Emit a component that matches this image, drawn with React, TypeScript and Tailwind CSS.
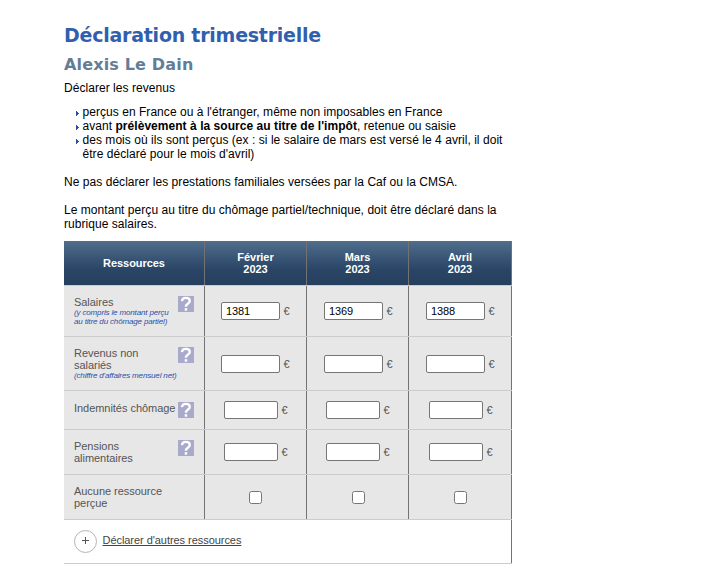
import React from "react";

const months = ["Février", "Mars", "Avril"];
const colWidth = ["w-[102px]", "w-[102px]", "w-[103px]"];
const widePad = ["pl-[16px]", "pl-[17px]", "pl-[17px]"];
const narrowPad = ["pl-[19px]", "pl-[19px]", "pl-[20px]"];
const checkPad = ["pl-[44px]", "pl-[45px]", "pl-[45px]"];

function Help({ top }: { top: string }) {
  return (
    <svg className={`${top} h-4 w-4 shrink-0`} viewBox="0 0 16 16">
      <rect width="16" height="16" fill="#a9aacb" />
      <path d="M3.9 5.1C4.1 2.9 5.6 1.9 7.9 1.9c2.4 0 3.9 1.1 3.9 3 0 2.6-3.9 2.7-3.9 5.9" fill="none" stroke="#fff" strokeWidth="2.3" />
      <rect x="6.7" y="12.2" width="2.5" height="2.5" fill="#fff" />
    </svg>
  );
}

function Label({ lines, note, pad, help }: { lines: string[]; note?: string[]; pad: string; help?: string }) {
  return (
    <div className="flex w-[141px] shrink-0 border-r border-[#737373] pl-[10px]">
      <div className={`${pad} w-[104px] whitespace-nowrap text-[11px] leading-[12px] tracking-[-0.04px] text-[#555]`}>
        {lines.map((l) => (
          <div key={l}>{l}</div>
        ))}
        {note?.map((l) => (
          <div key={l} className="text-[8px] italic leading-[9px] tracking-[-0.15px] text-[#2b4ea8]">{l}</div>
        ))}
      </div>
      {help && <Help top={help} />}
    </div>
  );
}

function AmountCells({ wide, pad, values = ["", "", ""] }: { wide?: boolean; pad: string; values?: string[] }) {
  return (
    <>
      {values.map((v, i) => (
        <div key={i} className={`flex shrink-0 border-r border-[#737373] ${colWidth[i]} ${wide ? widePad[i] : narrowPad[i]} ${pad}`}>
          <input
            defaultValue={v}
            className={`h-[18px] rounded-[2px] border border-[#767676] bg-white px-1 py-0 text-[11px] leading-[16px] tracking-[-0.15px] text-black ${wide ? "w-[59px]" : "w-[54px]"}`}
          />
          <span className="ml-[3.5px] text-[11px] leading-[18px] text-[#555]">€</span>
        </div>
      ))}
    </>
  );
}

const row = "flex border-b border-[#ccc] bg-[#e7e7e7]";

export default function App() {
  return (
    <main className="h-[582px] w-[724px] overflow-hidden bg-white pl-16 pt-[23px] font-['Liberation_Sans',Arial,sans-serif] text-[12px] leading-[14px] tracking-[0.045px] text-black">
      <h1 className="h-6 whitespace-nowrap font-['DejaVu_Sans',Verdana,sans-serif] text-[19px] font-bold leading-6 tracking-[-0.24px] text-[#315fae]">Déclaration trimestrielle</h1>
      <h2 className="mt-2 h-5 whitespace-nowrap font-['DejaVu_Sans',Verdana,sans-serif] text-[16px] font-bold leading-5 tracking-[0.16px] text-[#637d97]">Alexis Le Dain</h2>
      <p className="mt-[6px] whitespace-nowrap">Déclarer les revenus</p>
      <ul className="mt-[10px] whitespace-nowrap">
        {[
          <>perçus en France ou à l'étranger, même non imposables en France</>,
          <>avant <b>prélèvement à la source au titre de l'impôt</b>, retenue ou saisie</>,
          <>des mois où ils sont perçus (ex : si le salaire de mars est versé le 4 avril, il doit<br />être déclaré pour le mois d'avril)</>,
        ].map((content, i) => (
          <li key={i} className="flex pl-3">
            <svg className="mr-[3.5px] mt-[6px] h-[5px] w-[3px] shrink-0" viewBox="0 0 3 5" shapeRendering="crispEdges">
              <path d="M0 0H1V1H2V2H3V3H2V4H1V5H0Z" fill="#2453a6" />
            </svg>
            <span>{content}</span>
          </li>
        ))}
      </ul>
      <p className="mt-[14px] whitespace-nowrap">Ne pas déclarer les prestations familiales versées par la Caf ou la CMSA.</p>
      <p className="mt-[14px] whitespace-nowrap">Le montant perçu au titre du chômage partiel/technique, doit être déclaré dans la<br />rubrique salaires.</p>

      <section className="mt-[10px] w-[448px] tracking-normal">
        <div className="flex h-[45px] border-b border-[#ccc] bg-linear-to-b from-[#506e8d] via-[#2a4566] via-65% to-[#253f5e] text-center text-[11px] font-bold leading-[12px] tracking-[-0.05px] text-white">
          <div className="w-[141px] border-r border-[#737373] pt-[16px]">Ressources</div>
          {months.map((m, i) => (
            <div key={m} className={`${colWidth[i]} border-r border-[#737373] pt-[10px]`}>{m}<br />2023</div>
          ))}
        </div>
        <div className={`${row} h-[51px]`}>
          <Label lines={["Salaires"]} note={["(y compris le montant perçu", "au titre du chômage partiel)"]} pad="pt-[10px]" help="mt-[10px]" />
          <AmountCells wide pad="pt-[16px]" values={["1381", "1369", "1388"]} />
        </div>
        <div className={`${row} h-[54px]`}>
          <Label lines={["Revenus non", "salariés"]} note={["(chiffre d'affaires mensuel net)"]} pad="pt-[10px]" help="mt-[10px]" />
          <AmountCells wide pad="pt-[18px]" />
        </div>
        <div className={`${row} h-[39px]`}>
          <Label lines={["Indemnités chômage"]} pad="pt-[11px]" help="mt-[11px]" />
          <AmountCells pad="pt-[10px]" />
        </div>
        <div className={`${row} h-[45px]`}>
          <Label lines={["Pensions", "alimentaires"]} pad="pt-[10px]" help="mt-[10px]" />
          <AmountCells pad="pt-[13px]" />
        </div>
        <div className={`${row} h-[45px]`}>
          <Label lines={["Aucune ressource", "perçue"]} pad="pt-[10px]" />
          {months.map((m, i) => (
            <div key={m} className={`${colWidth[i]} ${checkPad[i]} border-r border-[#737373] pt-[16px]`}>
              <input type="checkbox" className="block h-[13px] w-[13px]" />
            </div>
          ))}
        </div>
        <div className="flex h-[44px] border-b border-[#ccc]">
          <div className="flex w-full border-r border-[#737373] pl-[10px] pt-[10px]">
            <div className="flex h-[23px] w-[23px] justify-center rounded-full border border-[#b5b5b5] pt-[6px]">
              <svg className="h-[7px] w-[7px]" viewBox="0 0 7 7">
                <path d="M3.5 0V7M0 3.5H7" stroke="#555" />
              </svg>
            </div>
            <a className="ml-[5.5px] mt-[4px] whitespace-nowrap text-[11px] leading-[12px] tracking-[-0.05px] text-[#444] underline">Déclarer d'autres ressources</a>
          </div>
        </div>
      </section>
    </main>
  );
}
